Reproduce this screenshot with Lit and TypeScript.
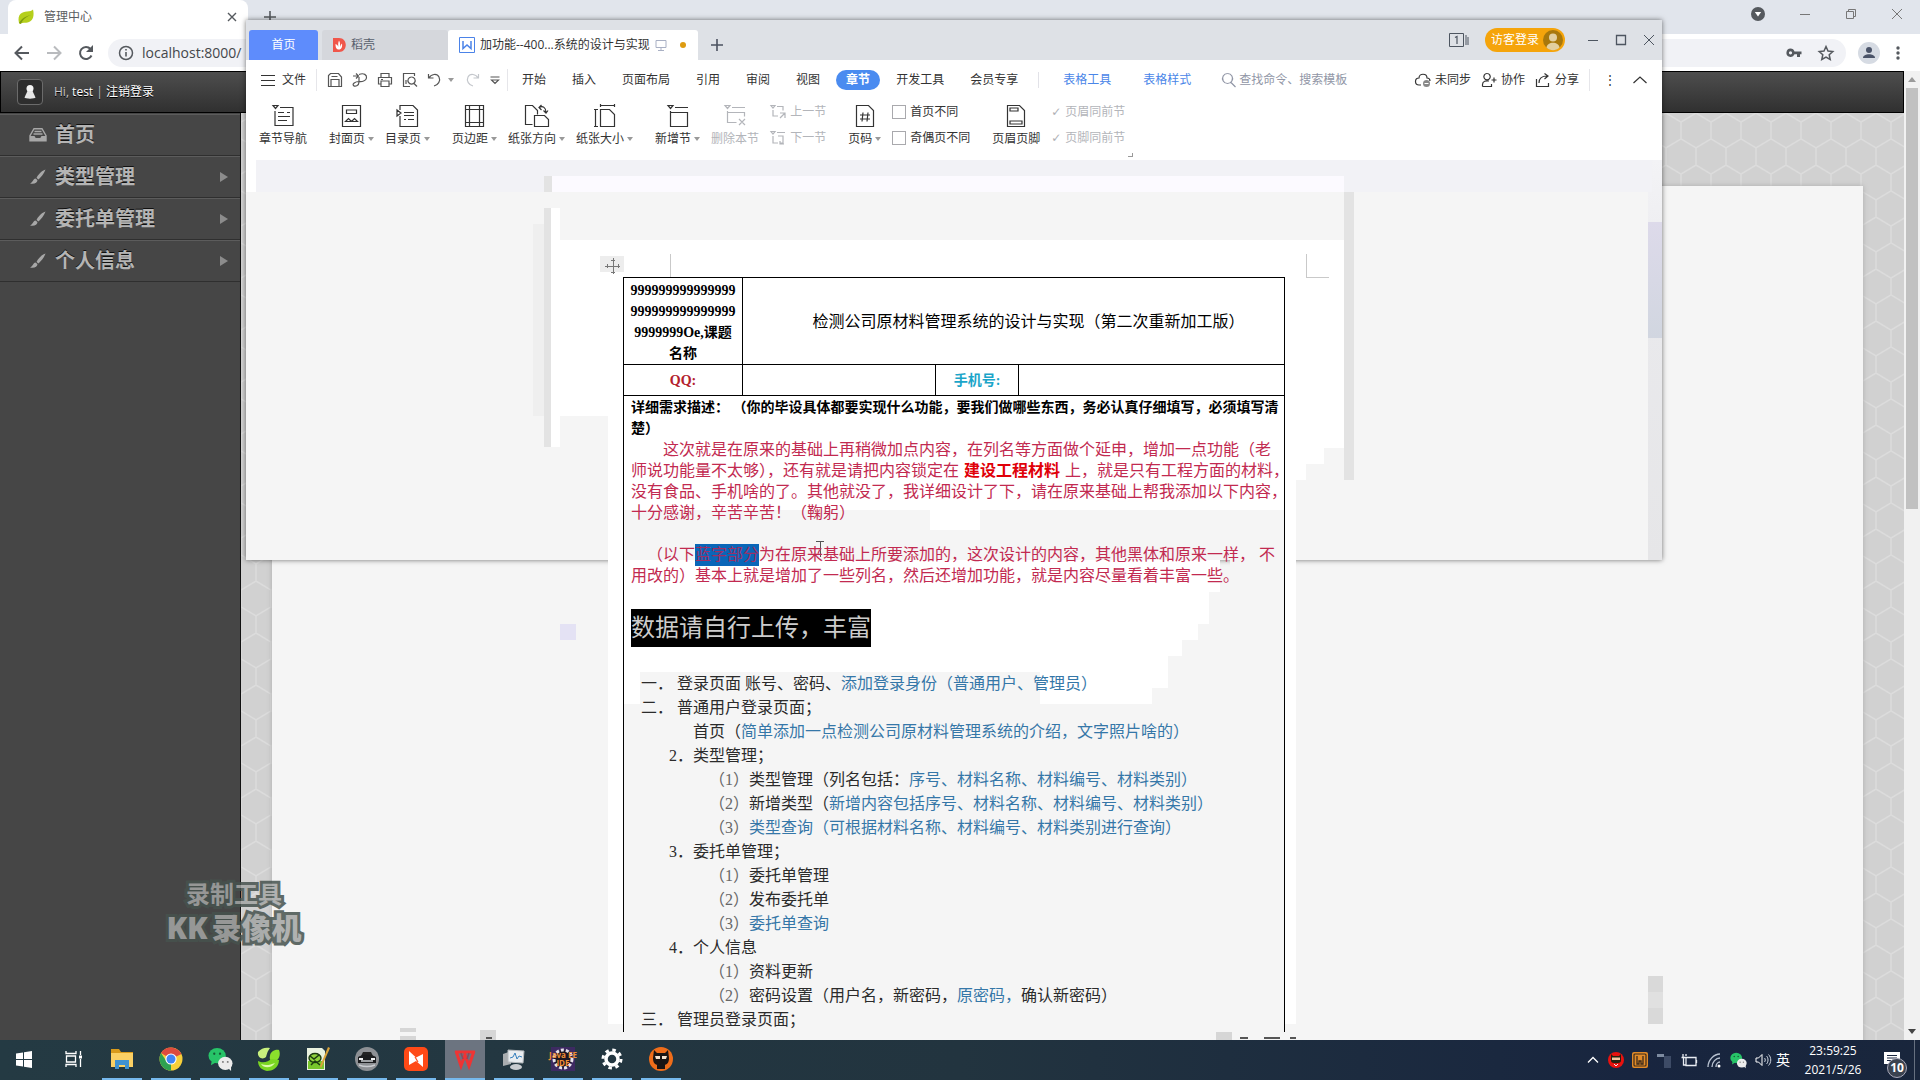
import { LitElement, html, svg, css, nothing } from "lit";
import { customElement } from "lit/decorators.js";
import { classMap } from "lit/directives/class-map.js";

const icon = (w: number, h: number, body: unknown, cls = "") =>
  html`<svg class="ic ${cls}" width=${w} height=${h} viewBox="0 0 ${w} ${h}" aria-hidden="true">${body}</svg>`;

/* ---------- browser icons ---------- */
const leaf = icon(16, 16, svg`<path d="M1 14C-1 5 4 3 9 2.500c3 0 5-1 6-2 1.500 6 0 11-4 12.500-4 1.500-7 0-9 2z" fill="#b5cf1c"/><path d="M1 14c3-5 7-7 12-8-5 2-8 4-10 9z" fill="#7f9c10"/>`);
const close = icon(10, 10, svg`<path d="M1 1l8 8M9 1l-8 8" stroke="currentColor" stroke-width="1.400" fill="none"/>`);
const plus = icon(12, 12, svg`<path d="M6 0v12M0 6h12" stroke="currentColor" stroke-width="1.600"/>`);
const back = icon(16, 16, svg`<path d="M15 8H2M8 1.500L1.500 8 8 14.500" stroke="currentColor" stroke-width="2" fill="none"/>`);
const forward = icon(16, 16, svg`<path d="M1 8h13M8 1.500L14.500 8 8 14.500" stroke="currentColor" stroke-width="2" fill="none"/>`);
const reload = icon(16, 16, svg`<path d="M13.500 10.500A6 6 0 1 1 12.500 4" stroke="currentColor" stroke-width="2" fill="none"/><path d="M15 0v7H8z" fill="currentColor"/>`);
const info = icon(16, 16, svg`<circle cx="8" cy="8" r="6.500" fill="none" stroke="currentColor" stroke-width="1.500"/><path d="M8 7v4.500M8 4v1.500" stroke="currentColor" stroke-width="1.600"/>`);
const key = icon(16, 16, svg`<path d="M4.500 3.500a4.200 4.200 0 1 0 4 5.800H11V12h3V9.300h1.500V6.500h-7a4.200 4.200 0 0 0-4-3zm0 2.700a1.600 1.600 0 1 1 0 3.200 1.600 1.600 0 0 1 0-3.200z" fill="currentColor"/>`);
const star = icon(16, 16, svg`<path d="M8 1.500l2 4.500 4.800.500-3.600 3.200 1 4.800L8 12l-4.200 2.500 1-4.800L1.200 6.500 6 6z" fill="none" stroke="currentColor" stroke-width="1.500"/>`);
const person = icon(22, 22, svg`<circle cx="11" cy="11" r="11" fill="#d6dbe3"/><circle cx="11" cy="8" r="3" fill="#4a5368"/><path d="M5 16c0-5 12-5 12 0z" fill="#4a5368"/>`);
const dots = icon(4, 16, svg`<circle cx="2" cy="3" r="1.700" fill="currentColor"/><circle cx="2" cy="8" r="1.700" fill="currentColor"/><circle cx="2" cy="13" r="1.700" fill="currentColor"/>`);
const minimise = icon(12, 12, svg`<path d="M1 6.500h10" stroke="currentColor"/>`);
const restore = icon(12, 12, svg`<path d="M1.500 3.500h7v7h-7zM3.500 3.500v-2h7v7h-2" fill="none" stroke="currentColor"/>`);
const maximise = icon(12, 12, svg`<path d="M1.500 1.500h9v9h-9z" fill="none" stroke="currentColor" stroke-width="1.300"/>`);
const closeThin = icon(12, 12, svg`<path d="M1 1l10 10M11 1L1 11" stroke="currentColor"/>`);
const badgeDown = icon(14, 14, svg`<circle cx="7" cy="7" r="7" fill="#55595e"/><path d="M3.800 5h6.400L7 9.500z" fill="#fff"/>`);

/* ---------- side menu icons ---------- */
const tray = icon(18, 14, svg`<path d="M5 .7h8l4 7v5H1v-5z" fill="none" stroke="#a8a8a8" stroke-width="1.400"/><path d="M5.500 3.500h7M4.500 6h9" stroke="#a8a8a8" stroke-width="1.300"/><path d="M1 8h4.500l1.200 2h4.600l1.200-2H17v5H1z" fill="#a8a8a8"/>`);
const brush = icon(18, 16, svg`<path d="M16.500.5C12 2 9 6 7.500 9l2 1.500C12 8 15 5 16.500.5zM6.500 9.500C4 10 4 13 1 14.500c4 1 7.500-.500 7.500-3.500z" fill="#a8a8a8"/>`);
const pawn = icon(12, 16, svg`<circle cx="6" cy="4.500" r="3.500" fill="#f4f4f4"/><path d="M3.500 7h5l3 6.500c0 1.500-11 1.500-11 0z" fill="#e6e6e6"/>`);

/* ---------- office quick bar ---------- */
const g = (d: string, w = 16, h = 16) => icon(w, h, svg`<path d=${d} fill="none" stroke="currentColor" stroke-width="1.200"/>`);
const save = g("M1.500 3.500v11h13V5l-3-3.500h-8zM4 14V7.500h8V14M4.500 4.500h6");
const pdf = g("M1 4h5M4 1.500L6.500 4 4 6.500M7 2.500C12 .5 15 3 14.500 6S10 10 7 9.500M7 5v5c0 4-4 5-5.500 3.500S3 9.500 7 9.500");
const printer = g("M4 5V1.500h8V5M3.500 12h-2V5.500h13V12h-2M4 9h8v5.500H4zM4 7.500h2");
const preview = g("M8 14.500H1.500v-13h11V4M9.500 5a3.600 3.600 0 1 0 .1 0M12 11.500l3 3M4 12V8");
const undo = g("M1.500 2v4h5M2 6C4 2 10 1 12 5s-1 8-5 9");
const redo = g("M14.500 2v4h-5M14 6C12 2 6 1 4 5s1 8 5 9");
const more = g("M3.500 5h9M4.500 8h7L8 11.500z");
const burger = g("M1 3.500h14M1 8.500h14M1 13.500h14");
const cloud = icon(16, 16, svg`<path d="M6 13H4a3.400 3.400 0 0 1 0-7C4 1 12 1 12 6c2 0 3 1 3 3" fill="none" stroke="currentColor" stroke-width="1.200"/><circle cx="11.500" cy="11.500" r="3.500" fill="#888"/><path d="M9.500 11.500h4" stroke="#fff"/>`);
const coop = g("M6 1.500a3.200 3.200 0 1 0 .1 0M1.500 14.500v-2C1.500 9 5 8.500 8 9M10.500 8h5M13 5.500v5M1.500 14.500h9V12");
const share = g("M1.500 7v7.500h12V11M4 11c0-5 3-7 8-7M9.500 1.500L13 4 9.500 7");
const chevUp = g("M1.500 11L8 5l6.500 6");
const magnifier = g("M6.500 1.500a5 5 0 1 0 .1 0M10 10.500l4.500 4.500");
const monitor = icon(12, 12, svg`<path d="M1 1.500h10v7H1zM6 9v2M3 11.500h6" fill="none" stroke="#a9b0c4"/>`);
const wDoc = icon(16, 16, svg`<path d="M.5.5h15v15H.5z" fill="#fff" stroke="#4b83e8"/><path d="M4 4v7.500L8 8l4 3.500V4" fill="none" stroke="#4b83e8" stroke-width="1.500"/>`);
const docer = icon(14, 14, svg`<path d="M1 0h6c9 0 9 14 0 14H1z" fill="#f0564a"/><path d="M3.500 6c0 4 1 5.500 3.500 5.500S10.500 9 10 5.500C9 6.500 8.500 7.500 8 9c0-2 .500-4-1-6.500C6 5 6 7 6.500 9 6 7.500 5 6.500 3.500 6z" fill="#fff"/>`);
const pages1 = icon(20, 14, svg`<path d="M.5.5h14v13H.5zM17 2v10M19 4v8" fill="none" stroke="#4d5560"/><path d="M6 4.500l2-1V11" fill="none" stroke="#4d5560" stroke-width="1.200"/>`);
const guest = icon(20, 20, svg`<circle cx="10" cy="10" r="10" fill="#a8780c"/><circle cx="10" cy="7.500" r="4" fill="#e2cfa0"/><path d="M3.500 17.500C4 11 16 11 16.500 17.500 13 21 7 21 3.500 17.500z" fill="#e2cfa0"/>`);

/* ---------- ribbon icons ---------- */
const ribbonIcons: Record<string, unknown> = {
  nav: g("M1 1.500h5L3.500 4.500zM8 3.500h13v18H3V7M6 8.500h6M15 8.500h3M6 12.500h12M6 16.500h9", 22, 23),
  cover: g("M1.500 1.500h18v21h-18zM5.500 6h10v3.500h-10zM4.500 17.500l3-3 3 3zM10.500 17.500l3-3 3 3z", 21, 23),
  toc: g("M4 6V1.500h13l4.500 4.500v16.500H4V12M1 6v6l4-3zM8 8.500h10M8 11.500h10M8 15.500h2M12 15.500h6", 23, 23),
  margin: g("M1.500 1.500h18v21h-18zM5.500 1.500v21M15.500 1.500v21M1.500 5.500h18M1.500 18.500h18", 21, 23),
  orient: g("M8.500 20.500h-7v-19h7l5 5v4M10.500 11.500h10l4 4v7h-14zM15 3.500c4-2 7 0 7 5M17.500 1L15 3.500 17.500 6M19.500 6.500L22 9l2-2.500", 25, 23),
  size: g("M1.500 5v18M0 5.500h4M0 22.500h4M6.500 5.500h9l5 5v12h-14zM6 1.500h15M6.500 0v3M20.500 0v3", 22, 23),
  add: g("M1 1.500h5L3.500 4.500zM8 3.500h13M3.500 7v15.500h17v-14h-17", 22, 23),
  del: g("M1 1.500h5L3.500 4.500zM8 3.500h13M3.500 7v11.500h9M3.500 8.500h17v4M15 15l6 6M21 15l-6 6", 22, 23),
  number: g("M1.500 1.500h12l5 5v16h-17zM8 8.500l-1 9M13 8.500l-1 9M5 11h10M5 15h10", 20, 23),
  header: g("M1.500 1.500h12l5 5v16h-17zM4 4h8v3H4zM4 17h12v3H4z", 20, 23),
  prev: g("M1 1.500h4L3 4zM7 2.500h6v4M3 6v6h5M10 9h5v5M10 14l5-5", 16, 16),
  next: g("M1 1.500h4L3 4zM7 2.500h8M3 6v7h5M8 6h5v7h-3M10 11v3h4", 16, 16),
};

/* ---------- taskbar icons ---------- */
const wechat = (s: number) => html`<svg class="ic" width=${s} height=${s} viewBox="0 0 26 26" aria-hidden="true"><ellipse cx="9.500" cy="9" rx="9" ry="8" fill="#27c468"/><path d="M4 14l-1 5 5-3z" fill="#27c468"/><circle cx="6.500" cy="7" r="1.200" fill="#165b35"/><circle cx="12.500" cy="7" r="1.200" fill="#165b35"/><ellipse cx="18" cy="17" rx="7.500" ry="6.800" fill="#ececec"/><path d="M21 22l3 3v-5z" fill="#ececec"/><circle cx="15.500" cy="15.500" r="1" fill="#777"/><circle cx="20.500" cy="15.500" r="1" fill="#777"/></svg>`;
const taskIcons: { name: string; art: unknown; run?: boolean; active?: boolean }[] = [
  { name: "开始", art: icon(16, 17, svg`<path d="M0 2.500L7 1.500V8H0zM8 1.300L16 0v8H8zM0 9h7v6.500L0 14.500zM8 9h8v8l-8-1.300z" fill="#fff"/>`) },
  { name: "任务视图", art: icon(17, 16, svg`<path d="M1 0v2.500h10V0M1.500 5h9v6h-9zM1 16v-2.500h10V16M15.500 0v4M15.500 8v8" fill="none" stroke="#fff" stroke-width="1.300"/><path d="M14 4.500h3v3h-3z" fill="#fff"/>`) },
  { name: "文件资源管理器", run: true, art: icon(24, 22, svg`<path d="M1 1h8l2 3h12v6H1z" fill="#d99a1b"/><path d="M1 5h22v14H1z" fill="#fbd064"/><path d="M5 21v-9h14v9h-4v-4H9v4z" fill="#3f92d2"/>`) },
  { name: "Chrome", run: true, art: icon(24, 24, svg`<circle cx="12" cy="12" r="11.500" fill="#f7cf3a"/><path d="M12 12L2 6C7-2 18-1 22.500 7z" fill="#dd4b3e"/><path d="M12 12v11.500C3 23.500-2 14 2 6l6 9z" fill="#2ea152"/><circle cx="12" cy="12" r="5.600" fill="#fff"/><circle cx="12" cy="12" r="4.500" fill="#4285f4"/>`) },
  { name: "微信", run: true, art: wechat(25) },
  { name: "绿叶", run: true, art: icon(24, 24, svg`<path d="M1 5C4 1 9 0 13 1c-3 4-3 6-4 9-3 3-9 1-8-5z" fill="#c8f07e"/><path d="M13 9c0-4 5-7 9-6 2 5 0 10-5 12-3 0-5-3-4-6z" fill="#8be02c"/><path d="M1 14c6 3 10 0 14-2l7 1c0 8-7 11-12 11-5-1-9-4-9-10z" fill="#7bd622"/><path d="M4 17c5 2 9 1 14-1-3 5-11 6-14 1z" fill="#dcf9ac"/>`) },
  { name: "Notepad++", run: true, art: icon(24, 24, svg`<path d="M1 1h15l3 3v19H1z" fill="#e9f2df"/><path d="M2 14h16v8H2z" fill="#78c62c"/><ellipse cx="9" cy="11" rx="6" ry="4.500" fill="#8fd33c" stroke="#1d3b10" stroke-width="1.400"/><path d="M5 18l4-4 5 4M4 9l4 3 5-4" stroke="#1d3b10" fill="none" stroke-width="1.500"/><path d="M22 0l2 1-8 18-1 2-1-2z" fill="#d9a33a"/>`) },
  { name: "汽车", run: true, art: icon(24, 24, svg`<circle cx="12" cy="12" r="12" fill="#8d9094"/><path d="M6 9l2-4h8l2 4z" fill="#222"/><path d="M3 10c5-3 13-3 18 0v6H3z" fill="#1b1c1e"/><path d="M6 14h12M4 18c5 2 11 2 16 0" stroke="#c9ccd0" stroke-width="1.500" fill="none"/><path d="M4 11h4v2H4zM16 11h4v2h-4z" fill="#f2f2f2"/>`) },
  { name: "录像", run: true, art: icon(24, 24, svg`<rect width="24" height="24" rx="5" fill="#ff4a17"/><path d="M5 4l7 6.500 7-3.500v13l-7-6-7 4z" fill="#fff"/><path d="M11 10l3 5" stroke="#ff4a17" stroke-width="1.200"/>`) },
  { name: "WPS", run: true, active: true, art: icon(24, 22, svg`<path d="M2 4h20M3 3l5 15 4-11 4 11 5-15" fill="none" stroke="#ee3434" stroke-width="3"/><path d="M8 5l2 6M16 5l-2 6" stroke="#8d4a5c" stroke-width="1.500"/>`) },
  { name: "性能监视", run: true, art: icon(24, 24, svg`<path d="M1 7l8-3v13l-8 2z" fill="#a9adb0"/><path d="M6 3l16 1-1 12-15-1z" fill="#e9edf0" stroke="#b4b9bd"/><path d="M8 11l3-1 2-4 2 6 2-3 3 1" stroke="#3680bd" fill="none"/><ellipse cx="14" cy="20" rx="6" ry="3" fill="#c8ccd0"/>`) },
  { name: "Java EE IDE", run: true, art: html`<span class="jee">${icon(24, 24, svg`<rect width="24" height="24" fill="#3d2a62"/><circle cx="12" cy="12" r="9" fill="#1d1622" stroke="#e6e2ea" stroke-width="3" stroke-dasharray="3 2"/>`)}<b>Java EE<br />IDE</b></span>` },
  { name: "设置", run: true, art: icon(22, 22, svg`<circle cx="11" cy="11" r="6" fill="none" stroke="#fff" stroke-width="3.500"/><circle cx="11" cy="11" r="9" fill="none" stroke="#fff" stroke-width="3" stroke-dasharray="3.500 3.570"/>`) },
  { name: "忍者", run: true, art: icon(24, 24, svg`<circle cx="12" cy="12" r="12" fill="#ef6d1a"/><path d="M5 3l3 3h8l3-3 1 8c0 5-2 6-4 7v4H8v-4c-2-1-4-2-4-7z" fill="#1a1514"/><path d="M6 9h5v3H7zM18 9h-5v3h4z" fill="#f5e3d0"/>`) },
];
const trayIcons: [string, unknown][] = [
  ["显示隐藏的图标", icon(14, 14, svg`<path d="M2 9.500l5-5 5 5" fill="none" stroke="#fff" stroke-width="1.300"/>`)],
  ["忍者助手", icon(16, 16, svg`<circle cx="8" cy="8" r="8" fill="#e8120f"/><path d="M3 2l2 2h6l2-2v7c0 3-10 3-10 0z" fill="#221"/><path d="M4 5.500h8v2.500H4z" fill="#f3c5a0"/><path d="M6 12l2 2 2-2" stroke="#eee" fill="none"/>`)],
  ["网络助手", icon(16, 16, svg`<rect width="16" height="16" rx="2" fill="#e08a28"/><rect x="2" y="2" width="12" height="12" rx="1" fill="none" stroke="#3a2a1c" stroke-width="1.200"/><path d="M5 4v8h2V9h2v3h2V4" fill="none" stroke="#3a2a1c" stroke-width="1.300"/>`)],
  ["设备", icon(16, 16, svg`<path d="M1 2h7v3H1z" fill="#7d8ba0"/><path d="M8 4h7v12H8z" fill="#3d4b66"/>`)],
  ["电源", icon(18, 14, svg`<path d="M6 4.500h10v8H6zM16.500 7v3M3 1v3M6 1v2M1.500 4.500h4M3.500 5v7h2" fill="none" stroke="#e8ecf2" stroke-width="1.300"/>`)],
  ["无线网络", icon(16, 16, svg`<path d="M2 15C2 8 8 2 14 2M6 15c0-5 4-9 8-9M10 15c0-3 2-5 4-5" fill="none" stroke="#b8c2d0" stroke-width="1.400"/><circle cx="13" cy="14" r="1.500" fill="#fff"/>`)],
  ["微信", wechat(17)],
  ["音量", icon(17, 14, svg`<path d="M1 5h2.500L7 1.500v11L3.500 9H1z" fill="none" stroke="#fff"/><path d="M9.500 5c1 1 1 3 0 4M11.500 3c2 2 2 6 0 8M13.500 1.500c3 3 3 8 0 11" fill="none" stroke="#cfd6e0"/>`)],
];

const ribbonGroups: { icon: string; label: string; caret?: boolean; off?: boolean }[][] = [
  [{ icon: "nav", label: "章节导航" }],
  [{ icon: "cover", label: "封面页", caret: true }, { icon: "toc", label: "目录页", caret: true }],
  [{ icon: "margin", label: "页边距", caret: true }, { icon: "orient", label: "纸张方向", caret: true }, { icon: "size", label: "纸张大小", caret: true }],
  [{ icon: "add", label: "新增节", caret: true }, { icon: "del", label: "删除本节", off: true }],
];

/* level, number, then alternating dark / blue runs */
const outline: [string, string, string, string?, string?, string?][] = [
  ["l1", "一．", "登录页面 账号、密码、", "添加登录身份（普通用户、管理员）"],
  ["l1", "二．", "普通用户登录页面；"],
  ["l2", "", "首页（", "简单添加一点检测公司原材料管理系统的介绍，文字照片啥的）"],
  ["l2", "2．", "类型管理；"],
  ["l3", "（1）", "类型管理（列名包括：", "序号、材料名称、材料编号、材料类别）"],
  ["l3", "（2）", "新增类型（", "新增内容包括序号、材料名称、材料编号、材料类别）"],
  ["l3", "（3）", "", "类型查询（可根据材料名称、材料编号、材料类别进行查询）"],
  ["l2", "3．", "委托单管理；"],
  ["l3", "（1）", "委托单管理"],
  ["l3", "（2）", "发布委托单"],
  ["l3", "（3）", "", "委托单查询"],
  ["l2", "4．", "个人信息"],
  ["l3", "（1）", "资料更新"],
  ["l3", "（2）", "密码设置（用户名，新密码，", "原密码，", "确认新密码）"],
  ["l1", "三．", "管理员登录页面；"],
];

@customElement("app-root")
export class AppRoot extends LitElement {
  static styles = css`
    :host {
      display: block;
      position: relative;
      height: 100vh;
      overflow: hidden;
      background: #f5f5f5;
      font: 12px/16px "Open Sans", "Noto Sans CJK SC", sans-serif;
      color: #333;
    }
    * { box-sizing: border-box; }
    button, input { font: inherit; color: inherit; border: 0; background: none; padding: 0; margin: 0; }
    a { color: inherit; text-decoration: none; }
    .ic { display: block; flex: none; overflow: visible; }
    .desk { display: flex; flex-direction: column; height: 100vh; }

    /* browser */
    .strip { display: flex; align-items: center; height: 34px; background: #e1e5ec; padding: 0 17px 0 8px; color: #55595e; }
    .btab { display: flex; align-items: center; gap: 10px; width: 240px; height: 34px; padding: 0 11px 0 10px; background: #fff; border-radius: 8px 8px 0 0; margin-right: 16px; }
    .btab span { flex: 1; color: #5a5d61; }
    .wins { display: flex; align-items: center; gap: 34px; margin-left: auto; padding-bottom: 6px; color: #777; }
    .bar { display: flex; align-items: center; gap: 16px; height: 37px; background: #fff; padding: 0 20px 0 14px; color: #55595e; flex: none; }
    .bar .fwd { color: #b9bbbe; }
    .url { display: flex; align-items: center; gap: 8px; flex: 1; height: 28px; border-radius: 14px; background: #f1f2f6; padding: 0 12px 0 10px; margin-left: -2px; margin-right: -4px; }
    .url input { flex: 1; font-size: 14px; color: #44474b; outline: 0; }
    .url button + button { margin-left: 8px; }
    .site { display: flex; flex: 1; min-height: 0; }
    .web { flex: 1; display: flex; flex-direction: column; min-width: 0; }
    .head { display: flex; align-items: center; gap: 11px; height: 42px; flex: none; padding: 0 16px; background: linear-gradient(#4e4e4e, #303030); border: 1px solid #000; color: #ccc; text-shadow: 0 1px 0 #000; }
    .ava { display: grid; place-items: center; width: 26px; height: 26px; border-radius: 4px; border: 1px solid #6b6b6b; background: #2e2e2e; }
    .head a { color: #fff; }
    .main { display: flex; flex: 1; min-height: 0; }
    .side { width: 241px; background: #464646; border-right: 1px solid #111; flex: none; padding-top: 1px; }
    .side a { display: flex; align-items: center; height: 42px; padding: 0 12px 0 29px; gap: 8px; border-top: 1px solid #5c5c5c; border-bottom: 1px solid #2f2f2f; color: #b4b4b4; font-size: 20px; line-height: 28px; font-weight: 700; text-shadow: 0 -1px 0 #111; }
    .side i { margin-left: auto; border: 5px solid transparent; border-left: 8px solid #8c8c8c; border-right: 0; }
    .hexes { position: relative; flex: 1; display: flex; padding: 73px 41px 0 31px; }
    .hexes svg { position: absolute; inset: 0; width: 100%; height: 100%; }
    .panel { position: relative; flex: 1; background: #f5f5f5; box-shadow: 0 0 5px #aaa; }
    .vbar { display: flex; flex-direction: column; align-items: center; width: 16px; background: #f1f1f1; padding: 6px 0 46px; }
    .up, .down { border: 4px solid transparent; border-bottom: 5px solid #9a9a9a; border-top: 0; }
    .down { border-top: 5px solid #444; border-bottom: 0; margin-top: auto; }
    .thumb { width: 12px; height: 44%; background: #c1c1c1; margin-top: 6px; }

    /* office window */
    .office { position: absolute; left: 246px; right: 258px; top: 20px; height: 50vh; background: #f5f5f5; box-shadow: 0 0 5px rgba(0, 0, 0, .55); display: flex; flex-direction: column; }
    .title { display: flex; align-items: flex-end; height: 40px; background: #dee1e6; padding-left: 3px; flex: none; }
    .title > button { height: 30px; display: flex; align-items: center; gap: 5px; }
    .title > .home { width: 69px; justify-content: center; background: #5e8cfc; color: #fff; border-radius: 3px 3px 0 0; margin-right: 4px; }
    .title > .docer { width: 126px; background: #d5d7dc; padding-left: 10px; color: #59606e; border-radius: 3px 3px 0 0; }
    .title > .cur { width: 250px; background: #fff; padding: 0 12px 0 11px; border-radius: 3px 3px 0 0; white-space: nowrap; }
    .dot { width: 6px; height: 6px; border-radius: 3px; background: #dd9b10; margin-left: auto; }
    .plus { padding-left: 13px; color: #4b5260; }
    .ctl { display: flex; align-items: center; height: 40px; gap: 16px; margin-left: auto; padding-right: 7px; color: #4d5560; }
    .login { display: flex; align-items: center; gap: 4px; height: 24px; padding: 0 2px 0 6px; border-radius: 12px; background: #f5a40b; color: #fff; margin-right: 6px; }
    .menu { display: flex; align-items: center; height: 40px; flex: none; background: #fff; padding: 0 14px 0 14px; white-space: nowrap; }
    .file { display: flex; align-items: center; gap: 6px; padding-right: 10px; margin-right: 10px; border-right: 1px solid #e6e6ea; height: 22px; }
    .quick { display: flex; align-items: center; gap: 9px; color: #555; height: 22px; padding-right: 4px; margin-right: 4px; border-right: 1px solid #e6e6ea; }
    .quick .last { margin-left: -2px; }
    .caret { border: 3px solid transparent; border-top: 4px solid #999; border-bottom: 0; }
    .quick .caret { margin: 0 1px 0 -4px; }
    .dim { color: #c4c7cc; }
    .tabs { display: flex; gap: 6px; }
    .tabs button { height: 20px; padding: 0 10px; border-radius: 10px; }
    .tabs .on { background: #4a8bf0; color: #fff; font-weight: 700; }
    .ctx { display: flex; color: #4a86e8; gap: 32px; border-left: 1px solid #e2e2e8; margin-left: 10px; padding: 0 0 0 24px; }
    .find { display: flex; align-items: center; gap: 2px; color: #9196a6; flex: 1; margin-left: 30px; }
    .find input { width: 120px; outline: 0; }
    .find input::placeholder { color: #9196a6; opacity: 1; }
    .acts { display: flex; align-items: center; gap: 10px; }
    .acts button { display: flex; align-items: center; gap: 4px; }
    .acts .kebab { border-left: 1px solid #e6e6ea; padding-left: 14px; height: 22px; margin-right: 6px; }
    .ribbon { display: flex; align-items: flex-start; gap: 22px; height: 60px; flex: none; background: #fff; padding: 4px 13px; white-space: nowrap; }
    .grp { display: flex; gap: 11px; }
    .big { display: flex; flex-direction: column; align-items: center; gap: 4px; }
    .big span { display: flex; align-items: center; gap: 3px; }
    .off { color: #b3b5ba; }
    .stack { display: flex; flex-direction: column; gap: 10px; }
    .stack button, .stack label { display: flex; align-items: center; gap: 4px; height: 16px; }
    .stack input { appearance: none; width: 14px; height: 14px; border: 1px solid #a9a9ad; background: #fff; }
    .stack input:disabled { border: 0; width: 10px; }
    .stack input:disabled::after { content: "✓"; display: block; font: 12px/14px "DejaVu Sans", sans-serif; color: #aeb0b5; }
    .canvas { display: flex; flex: 1; min-height: 0; }
    .scroll { flex: 1; display: flex; justify-content: center; align-items: flex-start; }
    .rail { width: 14px; background: linear-gradient(#f3f3f6, #e9e9ec 40%, #e6e6e8); padding-top: 62px; }
    .rail b { display: block; height: 116px; background: linear-gradient(#dddaea, #d1d6e0); }

    /* document */
    .page { position: relative; width: 800px; padding: 117px 62px 0 76px; }
    .under { position: absolute; left: 0; top: 0; overflow: visible; }
    table { position: relative; width: 100%; border-collapse: collapse; table-layout: fixed; font: 14px/21px "Liberation Serif", "Noto Sans CJK SC", serif; color: #000; }
    td, th { border: 1px solid #000; padding: 0 6px; font-weight: 400; text-align: center; }
    .name { font-weight: 700; height: 87px; padding: 2px 0 0; }
    .subject { font-size: 16px; padding-left: 36px; }
    .row2 td, .row2 th { height: 31px; font-weight: 700; }
    .row2 .qq { color: #b3202c; }
    .row2 .tel { color: #1ba5c9; }
    .body { text-align: left; padding: 1px 6px 0 7px; white-space: nowrap; border-bottom: 0; }
    .lead { font-weight: 700; }
    .red { font-size: 16px; color: #c22a50; }
    .red p { height: 21px; margin: 0; }
    .in2 { padding-left: 32px; }
    .in1 { padding-left: 16px; }
    .red b { color: #e00008; margin: 0 5px; }
    mark { display: inline-block; height: 22px; background: #0a66b8; color: #9c2f66; }
    .black { display: table; margin: 23px 0 25px; height: 36px; line-height: 38px; font-size: 24px; background: #000; color: #ccc; }
    .list { list-style: none; margin: 0; padding: 0; font-size: 16px; line-height: 24px; color: #2b2b2b; }
    .list li { display: flex; height: 24px; }
    .list .num { width: 36px; margin-left: 10px; }
    .list .l2 .num { width: 24px; margin-left: 38px; }
    .list .l3 .num { width: 40px; margin-left: 78px; color: #666; }
    .list em { font-style: normal; color: #3577a8; }

    /* recorder mark */
    .logo { position: absolute; left: 160px; bottom: 135px; display: flex; flex-direction: column; align-items: center; width: 142px; font-weight: 700; color: #a4a6a5; -webkit-text-stroke: 6px #46524e; paint-order: stroke fill; opacity: .85; white-space: nowrap; padding-left: 6px; }
    .logo span { font-size: 24px; line-height: 34px; }
    .logo strong { display: flex; gap: 4px; font-size: 30px; line-height: 34px; }
    .logo em { font-style: normal; }

    /* taskbar */
    .task { position: absolute; left: 0; right: 0; bottom: 0; display: flex; height: 40px; background: linear-gradient(90deg, #243a43, #22343f 50%, #18253f 85%, #19263c); color: #fff; }
    .apps { display: flex; padding-left: 4px; gap: 9px; }
    .apps button { display: grid; place-items: center; width: 40px; height: 40px; border-bottom: 2px solid transparent; }
    .apps .run { border-color: #76b9ed; }
    .apps .active { background: #6c7480; }
    .jee { position: relative; }
    .jee b { position: absolute; inset: 4px -4px 0; font: 700 8px/8px "Open Sans", sans-serif; color: #f09035; text-align: center; }
    .tray { display: flex; align-items: center; gap: 8px; margin-left: auto; padding-right: 5px; }
    .ime { font-size: 14px; margin-right: 4px; margin-left: -4px; }
    .clock { display: flex; flex-direction: column; gap: 3px; text-align: center; width: 62px; white-space: nowrap; }
    .note { position: relative; width: 38px; height: 40px; border-right: 1px solid #66707f; margin-left: 5px; }
    .note .ic { margin-left: 7px; }
    .note span { position: absolute; left: 10px; top: 18px; width: 20px; height: 20px; border-radius: 10px; background: #3b4350; border: 1px solid #aab; font-weight: 700; line-height: 18px; text-align: center; }
  `;

  private browser() {
    return html`<div class="desk">
      <div class="strip">
        <div class="btab">${leaf}<span>管理中心</span><button aria-label="关闭标签页">${close}</button></div>
        <button aria-label="新标签页">${plus}</button>
        <div class="wins"><button aria-label="搜索标签页">${badgeDown}</button><button aria-label="最小化">${minimise}</button><button aria-label="还原">${restore}</button><button aria-label="关闭">${closeThin}</button></div>
      </div>
      <div class="bar">
        <button aria-label="后退">${back}</button><button class="fwd" aria-label="前进">${forward}</button><button aria-label="重新加载">${reload}</button>
        <div class="url">${info}<input aria-label="地址" value="localhost:8000/" /><button aria-label="密码">${key}</button><button aria-label="收藏">${star}</button></div>
        <button aria-label="账户">${person}</button><button aria-label="菜单">${dots}</button>
      </div>
      <div class="site">
        <div class="web">
          <header class="head"><span class="ava">${pawn}</span><span>Hi, <a href="#user">test</a> | <a href="#logout">注销登录</a></span></header>
          <div class="main">
            <nav class="side">
              ${["首页", "类型管理", "委托单管理", "个人信息"].map((t, i) => html`<a href="#m${i}">${i ? brush : tray}<span>${t}</span>${i ? html`<i></i>` : nothing}</a>`)}
            </nav>
            <div class="hexes">
              <svg aria-hidden="true"><defs><pattern id="hex" width="30" height="52" patternUnits="userSpaceOnUse"><path d="M0 9L15 0l15 9v17l-15 9L0 26zM15 35v17" fill="none" stroke="#dcdcdc" stroke-width="1.500"/></pattern></defs><rect width="100%" height="100%" fill="#d1d1d1"/><rect width="100%" height="100%" fill="url(#hex)"/></svg>
              <div class="panel"></div>
            </div>
          </div>
        </div>
        <div class="vbar"><span class="up"></span><span class="thumb"></span><span class="down"></span></div>
      </div>
    </div>`;
  }

  private chrome() {
    return html`
      <div class="title">
        <button class="home">首页</button>
        <button class="docer">${docer}稻壳</button>
        <button class="cur">${wDoc}<span>加功能--400...系统的设计与实现</span>${monitor}<span class="dot"></span></button>
        <button class="plus" aria-label="新建">${plus}</button>
        <div class="ctl">${pages1}<button class="login">访客登录${guest}</button><button aria-label="最小化">${minimise}</button><button aria-label="最大化">${maximise}</button><button aria-label="关闭">${closeThin}</button></div>
      </div>
      <div class="menu">
        <button class="file">${burger}文件</button>
        <div class="quick"><button aria-label="保存">${save}</button><button aria-label="输出为PDF">${pdf}</button><button aria-label="打印">${printer}</button><button aria-label="打印预览">${preview}</button><button aria-label="撤销">${undo}</button><span class="caret"></span><button class="dim" aria-label="恢复">${redo}</button><button class="last" aria-label="更多">${more}</button></div>
        <div class="tabs">${["开始", "插入", "页面布局", "引用", "审阅", "视图", "章节", "开发工具", "会员专享"].map((t) => html`<button class=${classMap({ on: t === "章节" })}>${t}</button>`)}</div>
        <div class="ctx"><button>表格工具</button><button>表格样式</button></div>
        <label class="find">${magnifier}<input aria-label="查找" placeholder="查找命令、搜索模板" /></label>
        <div class="acts"><button>${cloud}未同步</button><button>${coop}协作</button><button>${share}分享</button><button class="kebab" aria-label="更多选项">⋮</button><button aria-label="收起">${chevUp}</button></div>
      </div>
      <div class="ribbon">
        ${ribbonGroups.map((grp) => html`<div class="grp">${grp.map((b) => this.big(b))}${grp[0].icon === "add"
          ? html`<div class="stack off"><button>${ribbonIcons.prev}上一节</button><button>${ribbonIcons.next}下一节</button></div>` : nothing}</div>`)}
        <div class="grp">${this.big({ icon: "number", label: "页码", caret: true })}
          <div class="stack"><label><input type="checkbox" />首页不同</label><label><input type="checkbox" />奇偶页不同</label></div></div>
        <div class="grp">${this.big({ icon: "header", label: "页眉页脚" })}
          <div class="stack off"><label><input type="checkbox" checked disabled />页眉同前节</label><label><input type="checkbox" checked disabled />页脚同前节</label></div></div>
      </div>`;
  }

  private big(b: { icon: string; label: string; caret?: boolean; off?: boolean }) {
    return html`<button class=${classMap({ big: true, off: !!b.off })}>${ribbonIcons[b.icon]}<span>${b.label}${b.caret ? html`<i class="caret"></i>` : nothing}</span></button>`;
  }

  private under() {
    return html`<svg class="under" width="800" height="880" viewBox="547 160 800 880" shape-rendering="crispEdges" aria-hidden="true">
      <path d="M256 160H1652V192H256z" fill="#f2f2f6"/><path d="M246 160h10v32h-10z" fill="#fff"/>
      <path d="M1128 156.500h4v-4" stroke="#999" fill="none"/>
      <path d="M552 176H1344V192H552z" fill="#fcfaff"/>
      <path d="M544 176h8v16h-8zM544 208h7v239h-7zM1344 192h10v288h-10z" fill="#e3e3e3"/>
      <path d="M533 224h11v192h-11z" fill="#efefef"/>
      <path d="M551 208h9v32H1344V448H1324V464H1306V480H1296V1024H1285V510H980V560H1220V592H1209V624H1198V640H1182V656H1168V688H1152V704H1040V672H640V704H623V1024H608V416H560V447H551z" fill="#fff"/>
      <path d="M623 510H930V530H980V560H623zM1100 510H1284V590H1230V545H1100z" fill="#f5f5f5"/>
      <path d="M670 254v23M1306 254v23M1306 277h23" stroke="#c9c9c9" fill="none"/>
      <path d="M600 256h24v16h-24z" fill="#ededed"/>
      <path d="M613 258v16M605 266h15M611 260h4M611 272h4M607 264v4M618 264v4" stroke="#777" fill="none"/>
      <path d="M560 624h16v16h-16z" fill="#e4e2f4"/>
      <path d="M816 541h8M820 541v16" stroke="#555" fill="none"/>
      <path d="M400 1028h16v4h-16zM400 1036h16v4h-16zM480 1030h16v10h-16zM1216 1032h16v8h-16z" fill="#d6d6d6"/>
      <path d="M486 1038h6M1240 1038h8M1264 1038h16M1290 1038h6" stroke="#555" stroke-width="2"/>
      <path d="M1648 976h15v16h-15zM1648 1008h15v16h-15z" fill="#d9d9d9"/><path d="M1648 992h15v16h-15z" fill="#e0e0e0"/>
    </svg>`;
  }

  private page() {
    return html`<article class="page">
      ${this.under()}
      <table>
        <colgroup><col width="119" /><col width="193" /><col width="83" /><col /></colgroup>
        <tbody>
          <tr><th class="name" scope="row">999999999999999<br />999999999999999<br />9999999Oe,课题<br />名称</th><td class="subject" colspan="3">检测公司原材料管理系统的设计与实现（第二次重新加工版）</td></tr>
          <tr class="row2"><th class="qq" scope="row">QQ:</th><td></td><th class="tel" scope="row">手机号:</th><td></td></tr>
          <tr><td class="body" colspan="4">
            <div class="lead">详细需求描述： （你的毕设具体都要实现什么功能，要我们做哪些东西，务必认真仔细填写，必须填写清<br />楚）</div>
            <div class="red">
              <p class="in2">这次就是在原来的基础上再稍微加点内容，在列名等方面做个延申，增加一点功能（老</p>
              <p>师说功能量不太够），还有就是请把内容锁定在<b>建设工程材料</b>上，就是只有工程方面的材料，</p>
              <p>没有食品、手机啥的了。其他就没了，我详细设计了下，请在原来基础上帮我添加以下内容，</p>
              <p>十分感谢，辛苦辛苦！（鞠躬）</p>
              <p></p>
              <p class="in1">（以下<mark>蓝字部分</mark>为在原来基础上所要添加的，这次设计的内容，其他黑体和原来一样， 不</p>
              <p>用改的）基本上就是增加了一些列名，然后还增加功能，就是内容尽量看着丰富一些。</p>
            </div>
            <div class="black">数据请自行上传，丰富</div>
            <ol class="list">${outline.map(([lv, n, a, b, c]) => html`<li class=${lv}><span class="num">${n}</span><span>${a}${b ? html`<em>${b}</em>` : nothing}${c ?? nothing}</span></li>`)}</ol>
          </td></tr>
        </tbody>
      </table>
    </article>`;
  }

  render() {
    return html`
      ${this.browser()}
      <section class="office">
        ${this.chrome()}
        <div class="canvas"><div class="scroll">${this.page()}</div><div class="rail"><b></b></div></div>
      </section>
      <div class="logo"><span>录制工具</span><strong><em>KK</em><em>录像机</em></strong></div>
      <footer class="task">
        <div class="apps">${taskIcons.map((t) => html`<button aria-label=${t.name} class=${classMap({ run: !!t.run, active: !!t.active })}>${t.art}</button>`)}</div>
        <div class="tray">
          ${trayIcons.map(([n, a]) => html`<button aria-label=${n}>${a}</button>`)}
          <button class="ime">英</button>
          <div class="clock"><span>23:59:25</span><span>2021/5/26</span></div>
          <button class="note" aria-label="通知">${icon(16, 16, svg`<path d="M0 0h16v12H8l-3 3v-3H0z" fill="#fff"/><path d="M3 3.500h10M3 6h10M3 8.500h6" stroke="#1a2740"/>`)}<span>10</span></button>
        </div>
      </footer>`;
  }
}
